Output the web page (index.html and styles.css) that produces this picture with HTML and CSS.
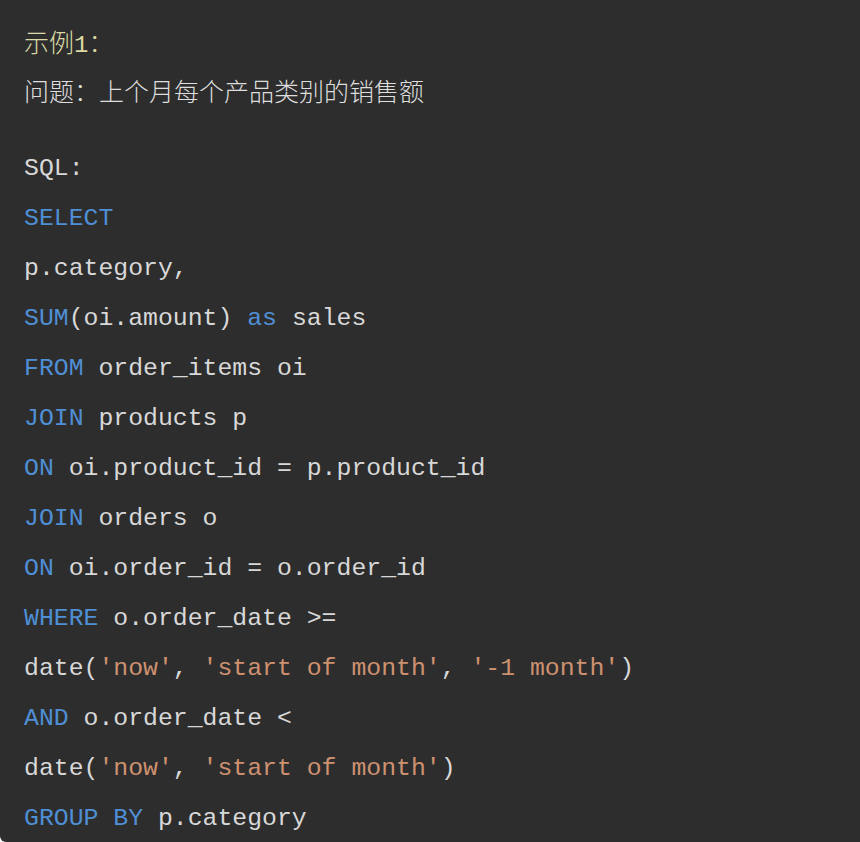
FILE: index.html
```html
<!DOCTYPE html>
<html lang="zh">
<head>
<meta charset="utf-8">
<link rel="stylesheet" href="styles.css">
</head>
<body>
<div class="block">
  <div class="intro">
    <div class="line title">示例<span class="num">1</span>：</div>
    <div class="line question">问题：上个月每个产品类别的销售额</div>
  </div>
  <div class="code">
    <div class="line">SQL:</div>
    <div class="line"><span class="kw">SELECT</span></div>
    <div class="line">p.category,</div>
    <div class="line"><span class="kw">SUM</span>(oi.amount) <span class="kw">as</span> sales</div>
    <div class="line"><span class="kw">FROM</span> order_items oi</div>
    <div class="line"><span class="kw">JOIN</span> products p</div>
    <div class="line"><span class="kw">ON</span> oi.product_id = p.product_id</div>
    <div class="line"><span class="kw">JOIN</span> orders o</div>
    <div class="line"><span class="kw">ON</span> oi.order_id = o.order_id</div>
    <div class="line"><span class="kw">WHERE</span> o.order_date &gt;=</div>
    <div class="line">date(<span class="str">'now'</span>, <span class="str">'start of month'</span>, <span class="str">'-1 month'</span>)</div>
    <div class="line"><span class="kw">AND</span> o.order_date &lt;</div>
    <div class="line">date(<span class="str">'now'</span>, <span class="str">'start of month'</span>)</div>
    <div class="line"><span class="kw">GROUP BY</span> p.category</div>
  </div>
</div>
</body>
</html>
```

FILE: styles.css
```css
html, body {
  margin: 0;
  padding: 0;
  background: #ffffff;
}
body {
  width: 860px;
  height: 842px;
  overflow: hidden;
}
.block {
  background: #2d2d2d;
  height: 842px;
  box-sizing: border-box;
  padding: 17px 0 0 24px;
  border-radius: 0 0 0 6px;
  font-family: "Liberation Mono", "Noto Sans CJK SC", monospace;
  color: #d8d8d8;
}
.line {
  height: 50px;
  line-height: 50px;
  white-space: pre;
}
.intro .line {
  font-family: "Noto Sans CJK SC", sans-serif;
  font-size: 25px;
  font-weight: 300;
  height: 49px;
  line-height: 49px;
}
.intro .title {
  color: #dcd9a6;
}
.intro .title .num {
  font-family: "Liberation Mono", monospace;
  font-size: 24px;
}
.intro .question {
  color: #dedede;
}
.code {
  margin-top: 28px;
  font-size: 24.8px;
}
.kw {
  color: #4f8fd6;
}
.str {
  color: #ce9170;
}
```
